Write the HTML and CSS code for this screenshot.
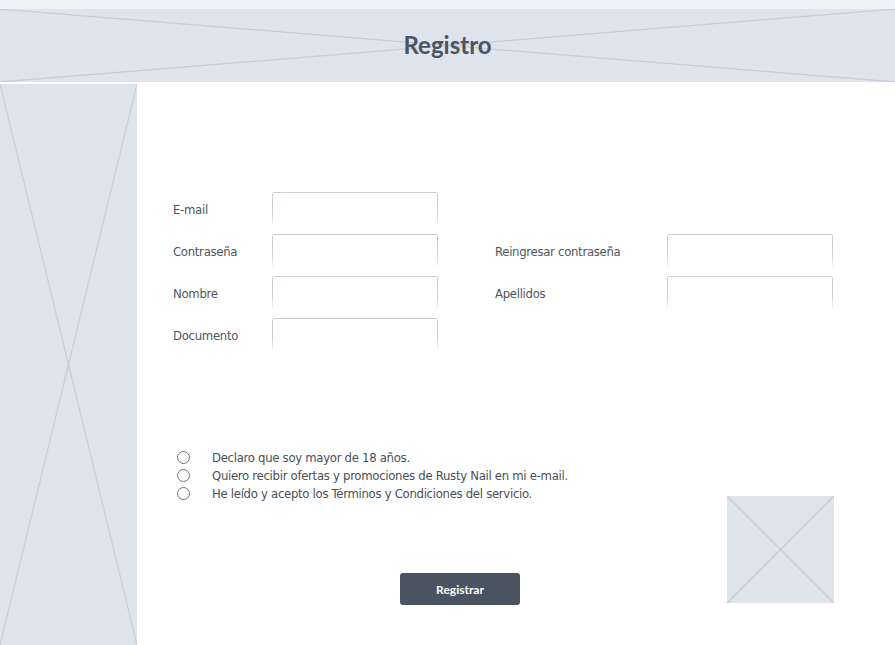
FILE: index.html
```html
<!DOCTYPE html>
<html lang="es">
<head>
<meta charset="utf-8">
<title>Registro</title>
<link rel="stylesheet" href="styles.css">
</head>
<body>
<div class="topstrip"></div>
<header class="header ph">
  <svg class="ph-x" viewBox="0 0 100 100" preserveAspectRatio="none"><line x1="0" y1="0" x2="100" y2="100" vector-effect="non-scaling-stroke"/><line x1="100" y1="0" x2="0" y2="100" vector-effect="non-scaling-stroke"/></svg>
  <h1 class="title">Registro</h1>
</header>
<div class="body-row">
  <aside class="sidebar ph">
    <svg class="ph-x" viewBox="0 0 100 100" preserveAspectRatio="none"><line x1="0" y1="0" x2="100" y2="100" vector-effect="non-scaling-stroke"/><line x1="100" y1="0" x2="0" y2="100" vector-effect="non-scaling-stroke"/></svg>
  </aside>
  <main class="main">
    <div class="form">
      <label class="lbl">E-mail</label><div class="inp"></div><span></span><span></span>
      <label class="lbl">Contraseña</label><div class="inp"></div><label class="lbl lbl2">Reingresar contraseña</label><div class="inp"></div>
      <label class="lbl">Nombre</label><div class="inp"></div><label class="lbl lbl2">Apellidos</label><div class="inp"></div>
      <label class="lbl">Documento</label><div class="inp"></div><span></span><span></span>
    </div>
    <div class="lower">
      <div class="left">
        <ul class="checks">
          <li><span class="radio"></span>Declaro que soy mayor de 18 años.</li>
          <li><span class="radio"></span>Quiero recibir ofertas y promociones de Rusty Nail en mi e-mail.</li>
          <li><span class="radio"></span>He leído y acepto los Términos y Condiciones del servicio.</li>
        </ul>
        <button class="btn">Registrar</button>
      </div>
      <div class="image ph">
        <svg class="ph-x" viewBox="0 0 100 100" preserveAspectRatio="none"><line x1="0" y1="0" x2="100" y2="100" vector-effect="non-scaling-stroke"/><line x1="100" y1="0" x2="0" y2="100" vector-effect="non-scaling-stroke"/></svg>
      </div>
    </div>
  </main>
</div>
</body>
</html>
```
FILE: styles.css
```css
* { box-sizing: border-box; }
html, body { margin: 0; padding: 0; }
body {
  width: 895px;
  height: 645px;
  overflow: hidden;
  background: #fff;
  font-family: "Liberation Sans Narrow", "DejaVu Sans Condensed", sans-serif;
  color: #4a4f57;
}
.topstrip { height: 9px; background: #eef1f5; }
.ph {
  display: grid;
  background: #dfe4ec;
}
.ph > * { grid-area: 1 / 1; }
.ph-x { width: 100%; height: 100%; display: block; }
.ph-x line { stroke: #c6cdd9; stroke-width: 1.3; }
.header { height: 73px; }
.title {
  margin: 0;
  align-self: center;
  justify-self: center;
  font-family: Lato, sans-serif;
  font-weight: 700;
  font-size: 24px;
  color: #4b5461;
  position: relative;
  top: -1px;
}
.body-row {
  display: flex;
  margin-top: 2px;
  height: 561px;
}
.sidebar { width: 137px; flex: none; }
.main {
  flex: 1;
  padding: 108px 0 0 36px;
}
.form {
  display: grid;
  grid-template-columns: 99px 166px 229px 166px;
  grid-auto-rows: 32px;
  row-gap: 10px;
  align-items: center;
}
.lbl {
  font-size: 13px;
  letter-spacing: -0.3px;
  color: #50555c;
  position: relative;
  top: 1px;
}
.lbl2 { margin-left: 57px; }
.inp {
  height: 32px;
  border: 1px solid #c9ced6;
  border-bottom: none;
  border-radius: 2px 2px 0 0;
  background: #fff;
  -webkit-mask-image: linear-gradient(#000 60%, rgba(0,0,0,0.25));
  mask-image: linear-gradient(#000 60%, rgba(0,0,0,0.25));
}
.lower {
  display: flex;
  margin-top: 98px;
}
.left { width: 554px; display: flex; flex-direction: column; }
.checks {
  list-style: none;
  margin: 0;
  padding: 0 0 0 4px;
}
.checks li {
  display: flex;
  align-items: center;
  height: 18px;
  font-size: 13px;
  letter-spacing: -0.3px;
  color: #4a4f57;
}
.radio {
  width: 13px;
  height: 13px;
  border: 1px solid #6f757d;
  border-radius: 50%;
  margin-right: 22px;
  flex: none;
}
.btn {
  margin: 71px 0 0 227px;
  width: 120px;
  height: 32px;
  border: none;
  border-radius: 3px;
  background: #4a5360;
  color: #fff;
  font-family: Lato, sans-serif;
  font-weight: 700;
  font-size: 12px;
  padding: 0;
}
.image {
  width: 107px;
  height: 107px;
  margin-top: 48px;
}
```
